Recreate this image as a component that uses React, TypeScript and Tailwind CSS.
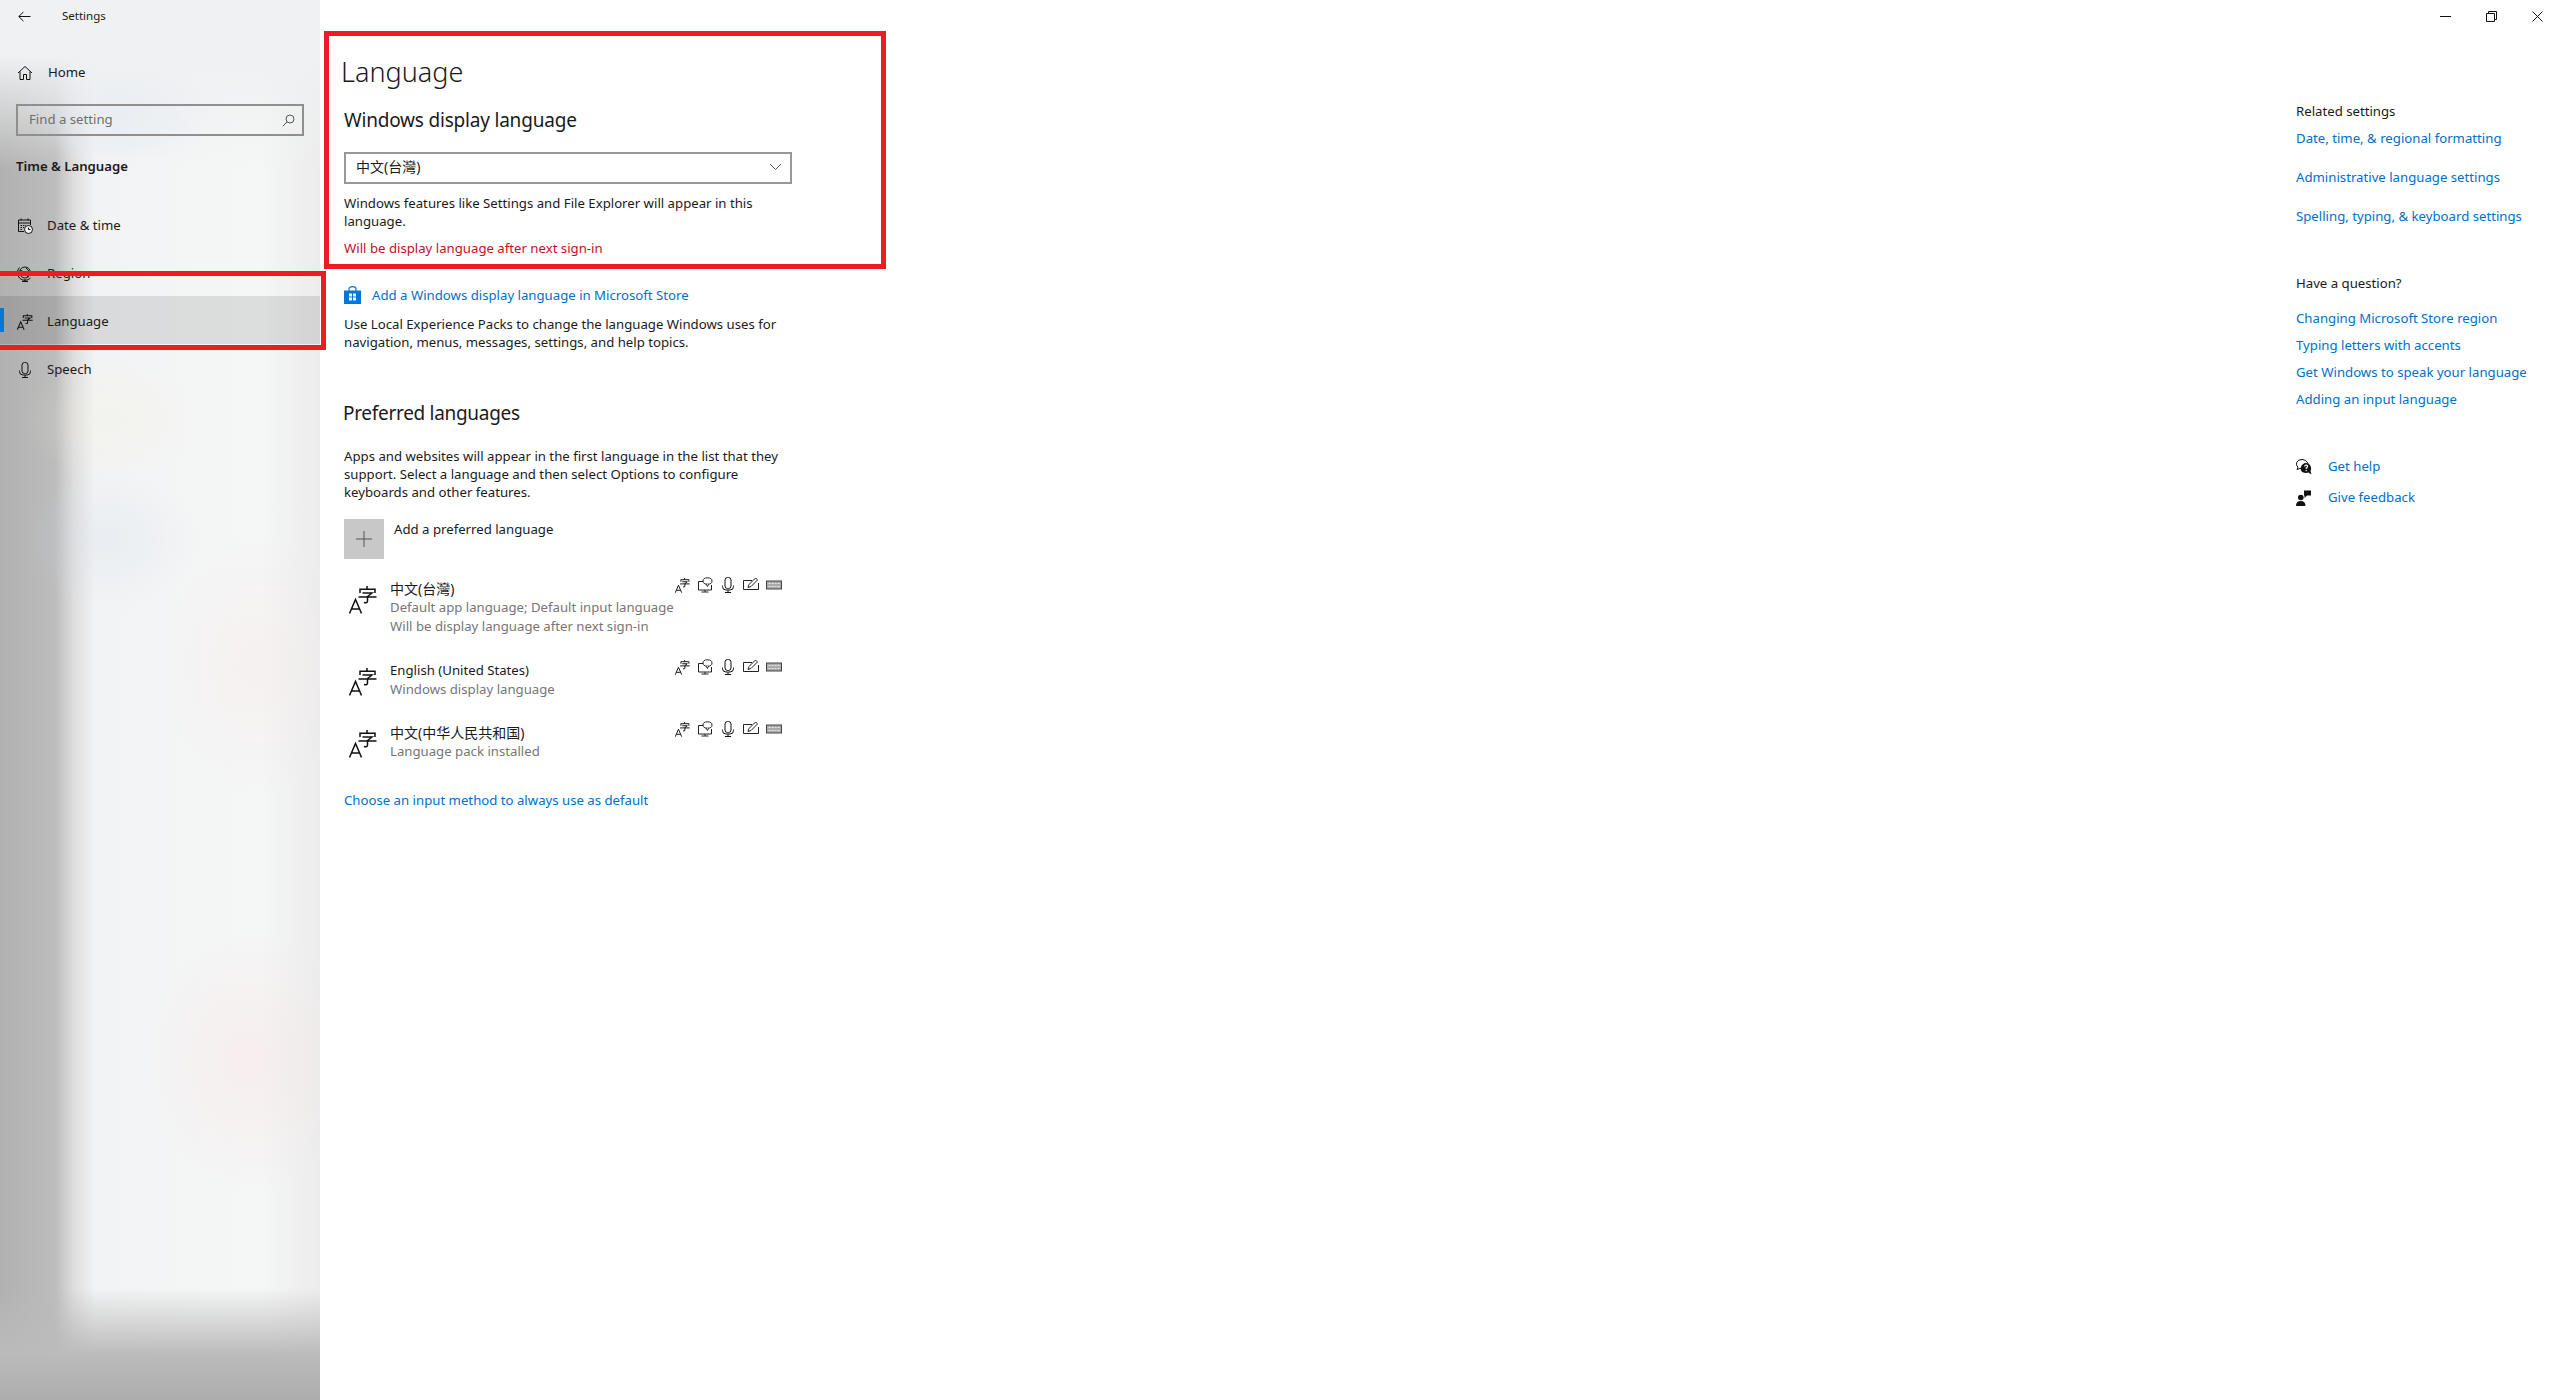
import React from "react";

const font = "font-['Noto_Sans','Noto_Sans_CJK_TC',sans-serif]";

function AZi({ size = 16, stroke = 1.2 }: { size?: number; stroke?: number }) {
  return (
    <svg width={size} height={size} viewBox="0 0 28 28" fill="none" stroke="#111" strokeWidth={stroke * 1.5}>
      <path d="M.5 27.5 L6.5 13.5 L12.5 27.5 M2.5 23 H10.5" />
      <path d="M18 0 V3 M11 7 V3.2 H26 V7 M13.5 7 H23 L18.5 10.5 V15 Q18.5 17.5 15 16.5 M9.5 11 H27.5" />
    </svg>
  );
}

function HomeIcon() {
  return (
    <svg width="16" height="16" viewBox="0 0 16 16" fill="none" stroke="#111" strokeWidth="1">
      <path d="M1 8 L8 1.5 L15 8 M3 6.5 V14.5 H6.5 V9.5 H9.5 V14.5 H13 V6.5" />
    </svg>
  );
}

function CalendarIcon() {
  return (
    <svg width="16" height="16" viewBox="0 0 16 16" fill="none" stroke="#111" strokeWidth="1">
      <path d="M7 13.5 H1.5 V2 H13.5 V7" />
      <path d="M1.5 5 H13.5 M4 .5 V2.5 M11 .5 V2.5" />
      <path d="M3.5 7.5 H9 M3.5 9.5 H7 M3.5 11.5 H6" strokeDasharray="1.5 1" />
      <circle cx="11.5" cy="11.5" r="4" fill="#f0f1f2" />
      <path d="M11.5 9.5 V11.5 H13.5" />
    </svg>
  );
}

function GlobeIcon() {
  return (
    <svg width="16" height="16" viewBox="0 0 16 16" fill="none" stroke="#111" strokeWidth="1">
      <circle cx="8" cy="6.5" r="5.5" />
      <path d="M3 4 L7 6 L5 9 M9 2 L12 5 L9 8 L11 11 M2.5 1.5 A7.5 7.5 0 0 0 13.5 12 M8 13 V15 M5 15.5 H11" />
    </svg>
  );
}

function MicIcon({ size = 16 }: { size?: number }) {
  return (
    <svg width={size} height={size} viewBox="0 0 16 16" fill="none" stroke="#111" strokeWidth="1">
      <rect x="5" y=".5" width="6" height="11" rx="2.5" />
      <path d="M2.5 8.5 V9.5 Q2.5 13 6 13 H10 Q13.5 13 13.5 9.5 V8.5 M8 13 V15.5 M5 15.5 H11" />
    </svg>
  );
}

function MonitorSpeech() {
  return (
    <svg width="16" height="16" viewBox="0 0 16 16" fill="none" stroke="#222" strokeWidth="1">
      <path d="M6 4.5 H1.5 V13 H14.5 V8 M4.5 15 H11.5 M8 13 V15" />
      <ellipse cx="10.5" cy="4" rx="4.5" ry="3.2" fill="#fff" />
      <path d="M9 7 L10.5 9.5 L11.5 7" fill="#fff" />
    </svg>
  );
}

function PenBox() {
  return (
    <svg width="16" height="16" viewBox="0 0 16 16" fill="none" stroke="#222" strokeWidth="1">
      <path d="M9 3.5 H.5 V12.5 H15.5 V6" />
      <path d="M5 10.5 L6 7.5 L12.5 1 L14.5 3 L8 9.5 Z" fill="#fff" />
    </svg>
  );
}

function KeyboardIcon() {
  return (
    <svg width="16" height="16" viewBox="0 0 16 16" fill="none">
      <rect x=".5" y="4" width="15" height="8" fill="#aaa" stroke="#444" />
      <path d="M2.5 6.5 H13.5 M2.5 9.5 H13.5" stroke="#e4e4e4" strokeDasharray="2 1" />
    </svg>
  );
}

function StoreIcon() {
  return (
    <svg width="17" height="18" viewBox="0 0 17 18" fill="none">
      <path d="M5 5 V3 Q5 .7 8.5 .7 Q12 .7 12 3 V5" stroke="#0078d7" strokeWidth="1.2" />
      <rect x="0" y="4.5" width="17" height="13.5" fill="#0078d7" />
      <path d="M5 7.5 H8 V10.5 H5 Z M9 7.5 H12 V10.5 H9 Z M5 11.5 H8 V14.5 H5 Z M9 11.5 H12 V14.5 H9 Z" fill="#fff" />
    </svg>
  );
}

function HelpIcon() {
  return (
    <svg width="16" height="16" viewBox="0 0 16 16">
      <path d="M6 .5 A5.5 4.5 0 0 0 2 8.2 L1 10.5 L4 9.5 A5.5 4.5 0 0 0 10 2 A5.5 4.5 0 0 0 6 .5 Z" fill="#fff" stroke="#111" strokeWidth="1" />
      <path d="M10 4 A5.5 5.5 0 0 0 6 13 Q10 14.5 12.5 13.5 L15.5 15.5 L14.5 12 A5.5 5.5 0 0 0 10 4 Z" fill="#111" />
      <path d="M8.5 7.5 Q8.8 6 10.2 6 Q11.8 6.2 11.5 7.6 Q11 8.5 10.2 9 V10" stroke="#fff" strokeWidth="1.2" fill="none" />
      <rect x="9.6" y="11" width="1.2" height="1.2" fill="#fff" />
    </svg>
  );
}

function FeedbackIcon() {
  return (
    <svg width="16" height="16" viewBox="0 0 16 16" fill="#111">
      <circle cx="4.8" cy="7.5" r="2.8" />
      <path d="M0 16 Q0 11 4.8 11 Q9.5 11 9.5 16 Z" />
      <path d="M8 .5 H15 V5.5 H11 L8.5 8 V5.5 H8 Z" />
    </svg>
  );
}

function Glass() {
  return (
    <svg width="13" height="13" viewBox="0 0 13 13" fill="none" stroke="#555" strokeWidth="1">
      <circle cx="8" cy="5" r="4" />
      <path d="M5 8 L.7 12.3" />
    </svg>
  );
}

const nav = [
  { label: "Date & time", icon: <CalendarIcon /> },
  { label: "Region", icon: <GlobeIcon /> },
  { label: "Language", icon: <AZi />, active: true },
  { label: "Speech", icon: <MicIcon /> },
];

const langs = [
  { name: "中文(台灣)", cjk: true, sub: ["Default app language; Default input language", "Will be display language after next sign-in"], cls: "mt-5" },
  { name: "English (United States)", cjk: false, sub: ["Windows display language"], cls: "mt-[25px]" },
  { name: "中文(中华人民共和国)", cjk: true, sub: ["Language pack installed"], cls: "mt-6" },
];

const Link = ({ children, cls = "" }: { children: React.ReactNode; cls?: string }) => (
  <div className={`h-[18px] leading-[18px] text-[#0070c9] whitespace-nowrap ${cls}`}>{children}</div>
);

export default function App() {
  return (
    <div className={`relative flex h-[1400px] w-[2560px] overflow-hidden bg-white text-[13.2px] text-[#1a1a1a] ${font}`}>
      <aside className="w-[320px] shrink-0 bg-[linear-gradient(to_top,#adadad,#bbbbbb_45px,rgba(187,187,187,0)_112px),linear-gradient(to_bottom,#eff1f2_55px,rgba(239,241,242,0)_170px),radial-gradient(ellipse_90px_130px_at_255px_665px,rgba(250,228,228,.3),rgba(250,228,228,0)),radial-gradient(ellipse_100px_130px_at_250px_1060px,rgba(250,225,225,.4),rgba(250,225,225,0)),radial-gradient(ellipse_90px_70px_at_110px_540px,rgba(205,220,235,.25),rgba(205,220,235,0)),radial-gradient(ellipse_90px_60px_at_110px_420px,rgba(245,240,215,.25),rgba(245,240,215,0)),radial-gradient(ellipse_100px_60px_at_120px_105px,rgba(215,228,242,.6),rgba(215,228,242,0)),linear-gradient(to_right,#b1b1b1,#bcbcbc_55px,#dedede_74px,#f2f3f4_95px,#f5f6f6_260px,#ececec_320px)]">
        <div className="flex h-8 items-center">
          <svg className="ml-[18px]" width="13" height="11" viewBox="0 0 13 11" fill="none" stroke="#111" strokeWidth="1">
            <path d="M12.5 5.5 H1 M5.5 .8 L.8 5.5 L5.5 10.2" />
          </svg>
          <span className="ml-[31px] text-[11.5px]">Settings</span>
        </div>
        <div className="mt-[17px] flex h-12 items-center pl-[17px]">
          <HomeIcon />
          <span className="ml-[15px]">Home</span>
        </div>
        <div className="mx-4 mt-[7px] flex h-8 items-center justify-between border-2 border-[#8f8f8f] pl-[11px] pr-[7px] text-[#6f6f6f]">
          <span>Find a setting</span>
          <Glass />
        </div>
        <div className="mt-4 h-7 pl-4 font-semibold leading-7">Time &amp; Language</div>
        <div className="mt-5">
          {nav.map((n) => (
            <div key={n.label} className={`relative flex h-12 items-center pl-[17px] pt-1 ${n.active ? "bg-black/10" : ""}`}>
              {n.active && <span className="absolute left-0 top-3 h-6 w-1 bg-[#0078d7]" />}
              {n.icon}
              <span className="ml-[14px]">{n.label}</span>
            </div>
          ))}
        </div>
      </aside>

      <main className="min-w-0 flex-1 pl-6 pt-[52px]">
        <h1 className="-ml-[3px] h-10 text-[27px] font-light leading-10">Language</h1>
        <h2 className="mt-[14px] h-7 text-[19px] leading-7 tracking-[-0.2px]">Windows display language</h2>
        <div className="mt-[18px] flex h-8 w-[448px] items-center justify-between border-2 border-[#999] pb-[2px] pl-[10px] pr-2">
          <span className="text-sm">中文(台灣)</span>
          <svg width="13" height="8" viewBox="0 0 13 8" fill="none" stroke="#555"><path d="M1 1 L6.5 6.5 L12 1" /></svg>
        </div>
        <p className="mt-[10px] w-[450px] leading-[18px]">Windows features like Settings and File Explorer will appear in this language.</p>
        <p className="mt-[9px] leading-[18px] text-[#c50f1f]">Will be display language after next sign-in</p>
        <div className="mt-[29px] flex h-[18px] items-center gap-[11px] text-[#0070c9]">
          <StoreIcon />
          <span className="pt-[2px]">Add a Windows display language in Microsoft Store</span>
        </div>
        <p className="mt-[11px] w-[450px] leading-[18px]">Use Local Experience Packs to change the language Windows uses for navigation, menus, messages, settings, and help topics.</p>
        <h2 className="-ml-px mt-12 h-7 text-[19px] leading-7 tracking-[-0.3px]">Preferred languages</h2>
        <p className="mt-5 w-[450px] leading-[18px]">Apps and websites will appear in the first language in the list that they support. Select a language and then select Options to configure keyboards and other features.</p>
        <div className="mt-[18px] flex h-10 items-start gap-[10px]">
          <div className="flex size-10 items-center justify-center bg-[#c8c8c8]">
            <svg width="16" height="16" viewBox="0 0 16 16" stroke="#555" strokeWidth="1"><path d="M8 0 V16 M0 8 H16" /></svg>
          </div>
          <span className="mt-[2px] leading-4">Add a preferred language</span>
        </div>
        {langs.map((l) => (
          <div key={l.name} className={`${l.cls} flex w-[450px] items-start`}>
            <div className="mr-[13px] mt-[7px] shrink-0 pl-[5px]"><AZi size={28} stroke={1} /></div>
            <div className="min-w-0 flex-1 leading-[19px] whitespace-nowrap">
              <div className={l.cjk ? "text-sm leading-[19px]" : ""}>{l.name}</div>
              {l.sub.map((s) => (
                <div key={s} className="text-[#767676]">{s}</div>
              ))}
            </div>
            <div className="-mt-[2px] flex items-center gap-[7px] pr-3">
              <AZi size={15} />
              <MonitorSpeech />
              <MicIcon />
              <PenBox />
              <KeyboardIcon />
            </div>
          </div>
        ))}
        <Link cls="mt-[30px]">Choose an input method to always use as default</Link>
      </main>

      <section className="w-[264px] shrink-0">
        <div className="flex h-8 justify-end">
          <div className="flex w-[46px] items-center justify-center">
            <svg width="11" height="11" viewBox="0 0 11 11" stroke="#111"><path d="M0 5.5 H11" /></svg>
          </div>
          <div className="flex w-[46px] items-center justify-center">
            <svg width="11" height="11" viewBox="0 0 11 11" fill="none" stroke="#111"><path d="M.5 2.5 H8.5 V10.5 H.5 Z M2.5 2.5 V.5 H10.5 V8.5 H8.5" /></svg>
          </div>
          <div className="flex w-[46px] items-center justify-center">
            <svg width="11" height="11" viewBox="0 0 11 11" stroke="#111"><path d="M.5 .5 L10.5 10.5 M10.5 .5 L.5 10.5" /></svg>
          </div>
        </div>
        <div className="mt-[70px] h-[18px] leading-[18px]">Related settings</div>
        <Link cls="mt-[9px]">Date, time, &amp; regional formatting</Link>
        <Link cls="mt-[21px]">Administrative language settings</Link>
        <Link cls="mt-[21px]">Spelling, typing, &amp; keyboard settings</Link>
        <div className="mt-[49px] h-[18px] leading-[18px]">Have a question?</div>
        <Link cls="mt-[17px]">Changing Microsoft Store region</Link>
        <Link cls="mt-[9px]">Typing letters with accents</Link>
        <Link cls="mt-[9px]">Get Windows to speak your language</Link>
        <Link cls="mt-[9px]">Adding an input language</Link>
        <div className="mt-[50px] flex h-[18px] items-center gap-4"><HelpIcon /><span className="text-[#0070c9]">Get help</span></div>
        <div className="mt-[13px] flex h-[18px] items-center gap-4"><FeedbackIcon /><span className="text-[#0070c9]">Give feedback</span></div>
      </section>

      <div className="absolute left-[324px] top-[31px] h-[238px] w-[562px] border-[5px] border-[#ed1c24]" />
      <div className="absolute left-[-5px] top-[271px] h-[79px] w-[331px] border-[5px] border-[#ed1c24]" />
    </div>
  );
}
